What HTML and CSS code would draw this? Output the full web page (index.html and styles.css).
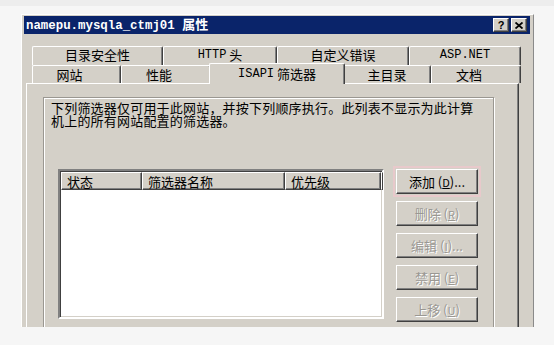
FILE: index.html
```html
<!DOCTYPE html>
<html lang="zh-CN">

<head>
    <meta charset="UTF-8">
    <meta name="viewport" content="width=device-width, initial-scale=1.0">
    <title>属性</title>
    <link rel="stylesheet" href="styles.css">
</head>

<body>
    <div class="window">
        <div class="titlebar">
            <span class="title">namepu.mysqla_ctmj01 <span class="cjk">属性</span></span>
            <div class="title-buttons">
                <span class="tb-btn">?</span>
                <span class="tb-btn">
                    <svg width="8" height="7" viewBox="0 0 8 7">
                        <path d="M0.5 0.5 L7.5 6.5 M7.5 0.5 L0.5 6.5" stroke="#000" stroke-width="1.8" />
                    </svg>
                </span>
            </div>
        </div>

        <div class="content">
            <div class="tabs">
                <div class="tab-row back">
                    <div class="tab" style="width: 131px">目录安全性</div>
                    <div class="tab" style="width: 114px"><span class="mono">HTTP</span>&nbsp;头</div>
                    <div class="tab" style="width: 132px">自定义错误</div>
                    <div class="tab" style="width: 112px"><span class="mono">ASP.NET</span></div>
                </div>
                <div class="tab-row front">
                    <div class="tab shift" style="width: 89px">网站</div>
                    <div class="tab shift" style="width: 90px">性能</div>
                    <div class="tab active" style="width: 136px"><span class="mono">ISAPI</span>&nbsp;筛选器</div>
                    <div class="tab" style="width: 88px">主目录</div>
                    <div class="tab shift" style="width: 90px">文档</div>
                </div>
            </div>

            <div class="panel">
                <div class="frame">
                    <p class="desc">下列筛选器仅可用于此网站，并按下列顺序执行。此列表不显示为此计算<br>机上的所有网站配置的筛选器。</p>

                    <div class="filter-area">
                        <div class="listbox">
                            <div class="list-header">
                                <div class="col" style="width: 81px">状态</div>
                                <div class="col" style="width: 143px">筛选器名称</div>
                                <div class="col" style="width: 96px">优先级</div>
                                <div class="col rest"></div>
                            </div>
                        </div>

                        <div class="buttons">
                            <button class="btn default">添加 (<u>D</u>)...</button>
                            <button class="btn" disabled>删除 (<u>R</u>)</button>
                            <button class="btn" disabled>编辑 (<u>I</u>)...</button>
                            <button class="btn" disabled>禁用 (<u>E</u>)</button>
                            <button class="btn" disabled>上移 (<u>U</u>)</button>
                        </div>
                    </div>
                </div>
            </div>
        </div>
    </div>
</body>

</html>
```

FILE: styles.css
```css
/* Reset */
* {
    margin: 0;
    padding: 0;
    box-sizing: border-box;
}

body {
    font-family: 'Noto Sans CJK SC', sans-serif;
    font-size: 13px;
    color: #000;
    background-color: #f6f6f6;
    border-top: 6px solid #ededed;
    min-height: 100vh;
}

/* Window */
.window {
    margin: 8px 0 0 21px;
    width: 513px;
    height: 313px;
    padding: 2px 3px 0 2px;
    background: #d4d0c8;
    border-top: 1px solid #fff;
    border-left: 1px solid #fff;
    border-right: 1px solid #8a8a8a;
    overflow: hidden;
}

.titlebar {
    height: 18px;
    margin-top: -1px;
    background: #0a246a;
    color: #fff;
    display: flex;
    align-items: center;
    padding: 0 3px 0 2px;
}

.title {
    font-family: 'Liberation Mono', 'Noto Sans CJK SC', monospace;
    font-weight: bold;
    font-size: 12.4px;
    line-height: 18px;
}

.title .cjk {
    font-family: 'Noto Sans CJK SC', sans-serif;
    font-size: 13px;
}

.title-buttons {
    margin-left: auto;
    display: flex;
    gap: 2px;
}

.tb-btn {
    width: 16px;
    height: 14px;
    background: #d4d0c8;
    color: #000;
    border: 1px solid;
    border-color: #fff #404040 #404040 #fff;
    box-shadow: inset -1px -1px #808080;
    display: flex;
    align-items: center;
    justify-content: center;
    font-family: 'Liberation Sans', sans-serif;
    font-weight: bold;
    font-size: 11px;
    line-height: 1;
}

/* Tabs */
.content {
    padding: 12px 0 0 5px;
}

.tabs {
    margin-left: 3px;
}

.tab-row {
    display: flex;
}

.tab-row.back {
    height: 19px;
}

.tab-row.back .tab {
    padding-bottom: 3px;
}

.tab-row.front {
    height: 18px;
}

.tab {
    flex: none;
    height: 100%;
    background: #d4d0c8;
    border-top: 1px solid #fff;
    border-left: 1px solid #fff;
    border-right: 1px solid #404040;
    box-shadow: inset -1px 0 #808080;
    border-radius: 2px 2px 0 0;
    display: flex;
    align-items: center;
    justify-content: center;
    white-space: nowrap;
    line-height: 1;
}

.tab.shift {
    padding-right: 14px;
}

.tab.active {
    height: calc(100% + 3px);
    margin: -2px -2px -1px;
    padding-bottom: 1px;
    position: relative;
    z-index: 1;
}

.mono {
    font-family: 'Liberation Mono', monospace;
    font-size: 12px;
}

/* Panel */
.panel {
    width: 493px;
    height: 250px;
    margin-left: -3px;
    border-top: 1px solid #fff;
    border-left: 1px solid #fff;
    border-right: 1px solid #404040;
    box-shadow: inset -1px 0 #808080;
    padding: 13px 24px 0 16px;
}

.frame {
    height: 240px;
    border: 1px solid #9a9791;
    box-shadow: inset 1px 1px #fff, 1px 1px #fff;
    padding: 3px 0 0 7px;
}

.desc {
    line-height: 13px;
    letter-spacing: 0.2px;
}

.filter-area {
    display: flex;
    gap: 12px;
    margin-top: 42px;
    padding-left: 7px;
}

/* List */
.listbox {
    width: 326px;
    height: 150px;
    background: #fff;
    border: 2px solid;
    border-color: #808080 #fff #fff #808080;
    box-shadow: inset 1px 1px #404040, inset -1px -1px #d4d0c8;
    padding: 1px 0 0 1px;
}

.list-header {
    display: flex;
    height: 18px;
}

.col {
    flex: none;
    background: #d4d0c8;
    border: 1px solid;
    border-color: #fff #404040 #404040 #fff;
    box-shadow: inset -1px -1px #808080;
    padding-left: 5px;
    display: flex;
    align-items: center;
    line-height: 1;
}

.col.rest {
    flex: 1;
    padding: 0;
}

/* Buttons */
.buttons {
    display: flex;
    flex-direction: column;
    gap: 7px;
}

.btn {
    width: 82px;
    height: 25px;
    font-family: 'Noto Sans CJK SC', sans-serif;
    font-size: 13px;
    background: #d4d0c8;
    color: #000;
    border: 1px solid;
    border-color: #fff #404040 #404040 #fff;
    box-shadow: inset -1px -1px #808080;
    line-height: 1;
}

.btn u {
    font-size: 11px;
}

.btn.default {
    outline: 2px solid #e8c9cb;
    outline-offset: 1px;
}

.btn:disabled {
    color: #9a9893;
    text-shadow: 1px 1px #fff;
}
```
